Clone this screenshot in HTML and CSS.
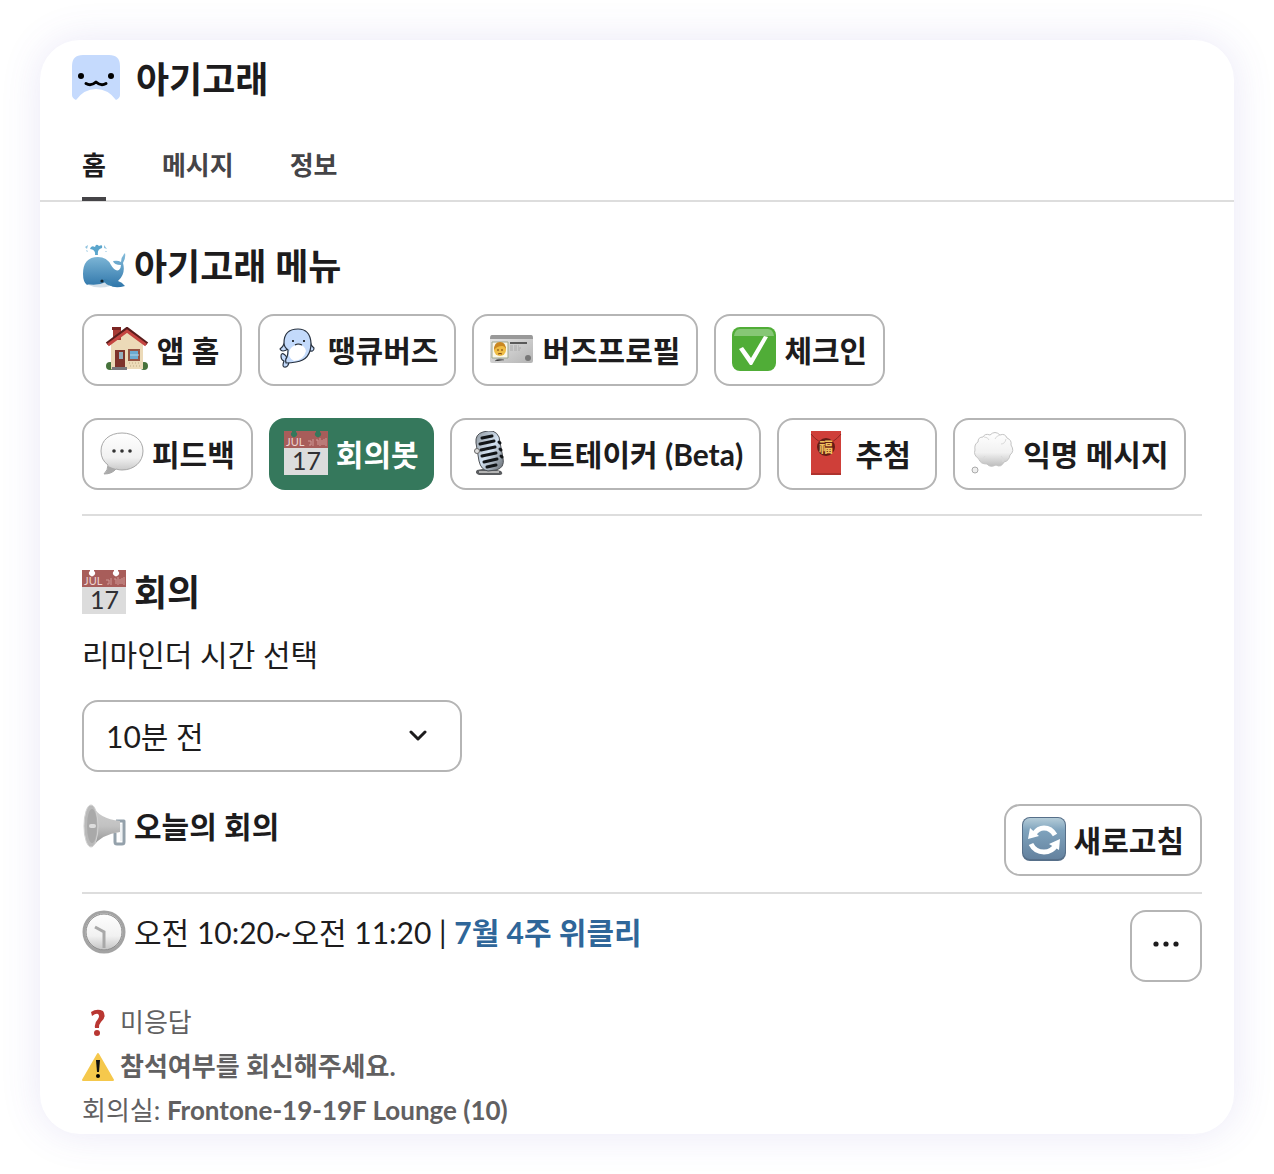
FILE: index.html
```
<!DOCTYPE html>
<html lang="ko">

<head>
	<meta charset="utf-8">
	<meta name="viewport" content="width=device-width, initial-scale=1">
	<title>아기고래</title>
	<link rel="stylesheet" href="styles.css">
</head>

<body>
	<!-- shared gradients -->
	<svg class="defs" width="0" height="0" aria-hidden="true">
		<defs>
			<linearGradient id="g-whale" x1="0" y1="0" x2="0" y2="1">
				<stop offset="0" stop-color="#86bddb"/>
				<stop offset="1" stop-color="#2f76aa"/>
			</linearGradient>
			<linearGradient id="g-gray" x1="0" y1="0" x2="0" y2="1">
				<stop offset="0" stop-color="#ffffff"/>
				<stop offset=".6" stop-color="#f1f1f1"/>
				<stop offset="1" stop-color="#bdbdbd"/>
			</linearGradient>
			<linearGradient id="g-card" x1="0" y1="0" x2="1" y2="1">
				<stop offset="0" stop-color="#e8e8e8"/>
				<stop offset="1" stop-color="#b4b4b4"/>
			</linearGradient>
			<linearGradient id="g-blue" x1="0" y1="0" x2="0" y2="1">
				<stop offset="0" stop-color="#b4ccd8"/>
				<stop offset=".3" stop-color="#7fa3bd"/>
				<stop offset="1" stop-color="#64829f"/>
			</linearGradient>
			<linearGradient id="g-horn" x1="0" y1="0" x2="0" y2="1">
				<stop offset="0" stop-color="#cfcfcf"/>
				<stop offset=".5" stop-color="#c2c2c2"/>
				<stop offset="1" stop-color="#8e8e8e"/>
			</linearGradient>
			<linearGradient id="g-mic" x1="0" y1="0" x2="1" y2="1">
				<stop offset="0" stop-color="#8d959c"/>
				<stop offset=".5" stop-color="#d3e2f2"/>
				<stop offset="1" stop-color="#62676c"/>
			</linearGradient>
		</defs>
	</svg>

	<main class="card">
		<header class="header">
			<svg class="avatar" viewBox="0 0 48 48" aria-hidden="true">
				<path fill="#c5dafd" d="M11 0h26q11 0 11 11v29q0 3-4 5Q36 34 24 34T4 45q-4-2-4-5V11Q0 0 11 0z"/>
				<circle cx="9" cy="21" r="3"/>
				<circle cx="39" cy="21" r="3"/>
				<path fill="none" stroke="#000" stroke-width="3" stroke-linecap="round" stroke-linejoin="round" d="M14 28.500q5 3 10-1.500q5 4.500 10 1.500"/>
			</svg>
			<h1>아기고래</h1>
		</header>
		<nav class="tabs">
			<a class="tab active" href="#home">홈</a>
			<a class="tab" href="#messages">메시지</a>
			<a class="tab" href="#about">정보</a>
		</nav>

		<section class="content menu" id="home">
			<h2 class="title">
				<svg class="icon" viewBox="0 0 44 44" aria-hidden="true">
					<path fill="#5aa5cc" d="M13 11Q14 6 8 5Q9 1 13 3Q14-1 17 2Q21 0 20 4Q15 5 16 11z"/>
					<path fill="#8fc3df" d="M3 3l3-2-1 4zM22 1l3 4-3-1zM4 6l2 1-1 1zM24 7l1 1-2 0z"/>
					<path fill="url(#g-whale)" d="M1 30Q1 13 16 13Q25 13 29 21Q33 28 37 26Q39 24 39 21Q32 21 31 17Q36 16 39 18Q39 13 43 9Q44 14 41 19Q44 30 36 37Q40 38 43 42Q33 45 27 41H5Q1 38 1 30z"/>
					<path fill="#d3dfe8" d="M4 40q12 2 20-2l4 4q-12 4-24-2z"/>
					<path fill="#3c82b0" d="M22 35q8 1 8 7q-8-1-8-7z"/>
					<circle cx="20" cy="37" r="1.6" fill="#14252f"/>
				</svg>
				아기고래 메뉴
			</h2>
			<div class="buttons">
				<button class="btn" type="button">
					<svg class="icon" viewBox="0 0 44 44" aria-hidden="true">
						<circle cx="5" cy="39" r="4" fill="#46723b"/>
						<circle cx="39" cy="39" r="4" fill="#46723b"/>
						<path fill="#ecdab8" d="M6 17L22 3l16 14v25H6z"/>
						<path fill="#a83a34" d="M8 1h8v12H8z"/>
						<path fill="#7c2522" d="M7 0h9v3H7z"/>
						<path fill="none" stroke="#5b1d1c" stroke-width="4" d="M2 17L22 2l20 15"/>
						<path fill="none" stroke="#c54541" stroke-width="3" d="M3 18L22 4l19 14"/>
						<path fill="#7d332c" d="M10 23h10v18H10z"/>
						<path fill="#94aebd" d="M14 25h4v7h-4z"/>
						<path fill="#6caad0" stroke="#965343" stroke-width="2" d="M24 23h10v10H24z"/>
						<path stroke="#b8d6e6" d="M25 28h9"/>
						<path stroke="#bda982" stroke-dasharray="1 2" d="M24 36h12M25 39h11"/>
						<path fill="#77777c" d="M7 40h15v3H7z"/>
					</svg>
					앱 홈
				</button>
				<button class="btn" type="button">
					<svg class="icon" viewBox="0 0 44 44" aria-hidden="true">
						<g fill="#c3dafb" stroke="#27313f" stroke-width="1.2" stroke-linejoin="round">
							<path d="M13 32q-2-1-4-4q-4-3-4 1q0 4 3 5q-2 5 0 6q5 1 5-7z"/>
							<path d="M9 15q-2 5-5 7q2 4 8 0zM34 15q1 4 4 6q0 5-6 2z"/>
							<path d="M8 16Q8 2 22 2q12 0 13 14q0 17-15 19q-5 1-10 1q-1-4 1-6q1-3 1-7q-4-3-4-7z"/>
						</g>
						<path fill="#fff" d="M13 25q2-7 9-7t8 6q-2 9-12 10q-6-3-5-9z"/>
						<circle cx="17" cy="14" r="1"/>
						<circle cx="28" cy="14" r="1"/>
						<path fill="none" stroke="#222" stroke-width="1.2" d="M19 18q3-2 7 0"/>
					</svg>
					땡큐버즈
				</button>
				<button class="btn" type="button">
					<svg class="icon" viewBox="0 0 44 44" aria-hidden="true">
						<rect x="0" y="8" width="43" height="28" rx="2" fill="url(#g-card)"/>
						<path fill="#999" d="M2 8h39q2 0 2 4H0q0-4 2-4z"/>
						<path fill="#faf7e8" stroke="#9ba58e" d="M2 15h16v16H2z"/>
						<circle cx="10" cy="23" r="6" fill="#efbd45"/>
						<path fill="#c98721" d="M4 23q0-8 6-8t6 8q-1-4-4-4q-5 0-8 4z"/>
						<path fill="none" stroke="#76410d" d="M7 23h2M11 23h2M8 27q2-1 4 0"/>
						<path stroke="#333" stroke-width="1.5" d="M20 16h17"/>
						<path stroke="#aaa" stroke-width="1" stroke-dasharray="3 1" d="M20 19h9M20 21h11M20 23h10"/>
						<path stroke="#777" d="M5 34q3-3 9-1"/>
						<circle cx="38" cy="31" r="3" fill="#777"/>
					</svg>
					버즈프로필
				</button>
				<button class="btn" type="button">
					<svg class="icon" viewBox="0 0 44 44" aria-hidden="true">
						<rect width="44" height="44" rx="8" fill="#50ad37"/>
						<path fill="#86c776" d="M8 2h28q5 0 6 7H2q1-7 6-7z"/>
						<path fill="#fff" d="M7 22l4-2 8 11L32 9l4 1-16 28h-2z"/>
					</svg>
					체크인
				</button>
			</div>
			<div class="buttons">
				<button class="btn" type="button">
					<svg class="icon" viewBox="0 0 44 44" aria-hidden="true">
						<path fill="url(#g-gray)" stroke="#a8a8a8" d="M22 2c12 0 21 7 21 18S34 39 22 39q-3 0-6-1q-4 5-12 5q4-4 4-9Q1 29 1 20C1 9 10 2 22 2z"/>
						<path fill="#aaa" d="M8 35q4 2 8 3q-4 5-12 5q4-3 4-8z"/>
						<circle cx="14" cy="20" r="1.8" fill="#333"/>
						<circle cx="22" cy="20" r="1.8" fill="#333"/>
						<circle cx="30" cy="20" r="1.8" fill="#333"/>
					</svg>
					피드백
				</button>
				<button class="btn primary" type="button">
					<svg class="icon calendar" viewBox="0 0 44 44" aria-hidden="true">
						<path fill="#dcdcdc" d="M0 17h44v27H0z"/>
						<path fill="#a85d5a" d="M0 0h8v1a3 3 0 1 0 4 0v-1h20v1a3 3 0 1 0 4 0v-1h8v17H0z"/>
						<text x="2" y="15" font-size="11" fill="#edd5d3">JUL</text>
						<path stroke="#cf9a96" fill="none" d="M24 10h3v4h-2M29 8v7M32 9h2v5M36 7v8M38 9v5M40 8v6M42 7v8"/>
						<text x="8" y="39" font-size="25" fill="#303033">17</text>
					</svg>
					회의봇
				</button>
				<button class="btn" type="button">
					<svg class="icon" viewBox="0 0 44 44" aria-hidden="true">
						<path fill="#5b5d60" d="M9 39q12-3 24 1q3 3-1 4H11q-5-2-2-5z"/>
						<path fill="#b4b4b4" d="M11 40h20v2H11z"/>
						<path fill="url(#g-mic)" stroke="#4d5156" d="M8 12Q7 3 15 1q12-4 16 5l4 21q2 10-7 12l-8 1q-7-1-9-10z"/>
						<path fill="none" stroke="#111417" stroke-width="3" stroke-linecap="round" d="M14 7l10-2M12 13l14-3M13 19l14-3M14 25l14-3M16 31l13-3M19 36l9-2M31 11l1 1M32 18l1 1M33 25l1 1"/>
						<circle cx="9" cy="20" r="2.5" fill="#e0e0e0" stroke="#666"/>
					</svg>
					노트테이커 (Beta)
				</button>
				<button class="btn" type="button">
					<svg class="icon" viewBox="0 0 44 44" aria-hidden="true">
						<path fill="#cf3f39" d="M7 0h30v44H7z"/>
						<path fill="none" stroke="#8e2723" d="M7 3q7 9 15 9t15-9M7 43h30"/>
						<circle cx="22" cy="16" r="9" fill="#641e16"/>
						<text x="15" y="21" font-size="14" fill="#f1c05f">福</text>
					</svg>
					추첨
				</button>
				<button class="btn" type="button">
					<svg class="icon" viewBox="0 0 44 44" aria-hidden="true">
						<path fill="url(#g-gray)" stroke="#c4c4c4" d="M12 6q2-4 7-2q5-5 10 0q5-2 7 3q5 2 4 7q4 6-1 10q-1 6-6 7q-3 6-8 3q-6 3-9-1q-7 0-8-5q-6-4-4-9q-1-6 3-8q0-5 5-5z"/>
						<path fill="none" stroke="#dadada" d="M13 6q4 0 5 3M29 4q-4 1-5 4M35 8q-1 5-5 5M7 28q5 1 7-3M32 31q1-4-2-6"/>
						<circle cx="4" cy="39" r="3" fill="#eee" stroke="#aaa"/>
					</svg>
					익명 메시지
				</button>
			</div>
		</section>

		<section class="content meeting">
			<h2 class="title">
				<svg class="icon calendar" viewBox="0 0 44 44" aria-hidden="true">
					<path fill="#dcdcdc" d="M0 17h44v27H0z"/>
					<path fill="#a85d5a" d="M0 0h8v1a3 3 0 1 0 4 0v-1h20v1a3 3 0 1 0 4 0v-1h8v17H0z"/>
					<text x="2" y="15" font-size="11" fill="#edd5d3">JUL</text>
					<path stroke="#cf9a96" fill="none" d="M24 10h3v4h-2M29 8v7M32 9h2v5M36 7v8M38 9v5M40 8v6M42 7v8"/>
					<text x="8" y="39" font-size="25" fill="#303033">17</text>
				</svg>
				회의
			</h2>
			<label class="label" for="reminder">리마인더 시간 선택</label>
			<div class="select">
				<select id="reminder">
					<option>10분 전</option>
				</select>
				<svg class="chevron" viewBox="0 0 20 12" aria-hidden="true">
					<path fill="none" stroke="#1d1c1d" stroke-width="3" stroke-linecap="round" stroke-linejoin="round" d="M3 2l7 7 7-7"/>
				</svg>
			</div>

			<div class="row today">
				<h3 class="line">
					<svg class="icon" viewBox="0 0 44 44" aria-hidden="true">
						<path fill="none" stroke="#94a1ab" stroke-width="3" stroke-linejoin="round" d="M34 17h8v21q0 2-2 2h-5q-2 0-2-2v-9"/>
						<path fill="none" stroke="#dfe5e9" d="M39 20v17"/>
						<path fill="url(#g-horn)" d="M10 1Q17 15 38 17v11Q20 30 10 43z"/>
						<ellipse cx="9" cy="22" rx="7" ry="21" fill="#b9b9b9" stroke="#d2d2d2"/>
						<ellipse cx="10" cy="22" rx="5" ry="17" fill="#a9a9a9"/>
						<rect x="7" y="20" width="7" height="4" rx="2" fill="#ddd"/>
					</svg>
					오늘의 회의
				</h3>
				<button class="btn" type="button">
					<svg class="icon" viewBox="0 0 44 44" aria-hidden="true">
						<rect width="44" height="44" rx="8" fill="#566f89"/>
						<rect x="1" y="1" width="42" height="41" rx="7" fill="url(#g-blue)"/>
						<path fill="none" stroke="#fff" stroke-width="5" d="M12 17Q16 11 22 11Q29 11 33 18M9 27Q13 35 22 35Q30 35 34 28"/>
						<path fill="#fff" d="M8 11l-2 11 11-3zM38 22l-11 5 10 6z"/>
					</svg>
					새로고침
				</button>
			</div>

			<div class="row event">
				<p class="line">
					<svg class="icon" viewBox="0 0 44 44" aria-hidden="true">
						<circle cx="22" cy="22" r="20" fill="url(#g-gray)" stroke="#a3a3a3" stroke-width="3"/>
						<circle cx="22" cy="22" r="18" fill="none" stroke="#888"/>
						<path fill="none" stroke="#a8a8a8" stroke-width="3" d="M13 17l9 5v16"/>
					</svg>
					<span>오전 10:20~오전 11:20 | <a href="#weekly">7월 4주 위클리</a></span>
				</p>
				<button class="btn more" type="button" aria-label="더보기">
					<svg viewBox="0 0 26 6" aria-hidden="true">
						<circle cx="3" cy="3" r="2.6"/>
						<circle cx="13" cy="3" r="2.6"/>
						<circle cx="23" cy="3" r="2.6"/>
					</svg>
				</button>
			</div>

			<div class="context">
				<p>
					<svg class="icon small" viewBox="0 0 32 32" aria-hidden="true">
						<path fill="#b93732" d="M9 6Q15 2 21 5Q25 11 19 16Q17 18 17 22H13Q12 17 16 13Q18 10 16 8Q14 7 10 10z"/>
						<circle cx="15" cy="27" r="3" fill="#b93732"/>
					</svg>
					미응답
				</p>
				<p>
					<svg class="icon small" viewBox="0 0 32 32" aria-hidden="true">
						<path fill="#f5c84c" stroke="#f5c84c" stroke-width="2" stroke-linejoin="round" d="M16 4l15 26H1z"/>
						<path fill="#111" d="M14 10h4l-1 12h-2z"/>
						<circle cx="16" cy="26" r="2"/>
					</svg>
					<b>참석여부를 회신해주세요.</b>
				</p>
				<p><span>회의실: <b>Frontone-19-19F Lounge (10)</b></span></p>
			</div>
		</section>
	</main>
</body>

</html>
```
FILE: styles.css
```
* {
	box-sizing: border-box;
}

body {
	margin: 0;
	padding: 40px;
	background: #fff;
	color: #1d1c1d;
	font-family: Lato, "Noto Sans CJK KR", sans-serif;
	font-size: 30px;
	line-height: 44px;
}

h1, h2, h3, p {
	margin: 0;
}

a {
	color: #2f6699;
	font-weight: bold;
	text-decoration: none;
}

.defs {
	position: absolute;
}

.card {
	background: #fff;
	border-radius: 40px;
	box-shadow: 0 0 40px rgba(90, 80, 190, 0.13);
}

.header {
	display: flex;
	align-items: center;
	gap: 16px;
	padding: 15px 32px 0;
}

.header h1 {
	font-size: 36px;
	line-height: 48px;
}

.avatar {
	width: 48px;
	height: 48px;
}

.tabs {
	display: flex;
	gap: 56px;
	margin-top: 40px;
	padding: 0 42px;
	border-bottom: 2px solid #ddd;
}

.tab {
	margin-bottom: -1px;
	padding-bottom: 10px;
	border-bottom: 4px solid transparent;
	color: #454447;
	font-size: 26px;
}

.tab.active {
	border-color: #454447;
	color: #1d1c1d;
}

.content {
	margin: 0 32px 0 42px;
}

.menu {
	padding: 42px 0 24px;
	border-bottom: 2px solid #ddd;
}

.title,
.line {
	display: flex;
	align-items: center;
	gap: 8px;
}

.title {
	font-size: 36px;
}

.line {
	font-size: 30px;
}

.icon {
	flex: none;
	width: 44px;
	height: 44px;
}

.small {
	width: 32px;
	height: 32px;
}

.calendar {
	font-weight: normal;
}

.buttons {
	display: flex;
	flex-wrap: wrap;
	gap: 16px;
	margin-top: 26px;
}

.buttons + .buttons {
	margin-top: 32px;
}

.btn {
	display: flex;
	align-items: center;
	justify-content: center;
	gap: 8px;
	min-width: 160px;
	height: 72px;
	padding: 0 16px;
	border: 2px solid #b5b5b5;
	border-radius: 16px;
	background: #fff;
	color: #1d1c1d;
	font: inherit;
	font-weight: bold;
	cursor: pointer;
}

.btn .icon {
	margin-bottom: 2px;
}

.primary {
	padding: 0 15px;
	border: 0;
	background: #35785c;
	color: #fff;
}

.meeting {
	padding: 54px 0 2px;
}

.label {
	display: block;
	margin-top: 18px;
}

.select {
	position: relative;
	max-width: 380px;
	margin-top: 24px;
}

.select select {
	display: block;
	width: 100%;
	height: 72px;
	padding: 0 22px;
	border: 2px solid #b5b5b5;
	border-radius: 16px;
	background: #fff;
	color: #1d1c1d;
	font: inherit;
	appearance: none;
}

.chevron {
	position: absolute;
	top: 30px;
	right: 34px;
	width: 20px;
	height: 12px;
	pointer-events: none;
}

.row {
	display: flex;
	align-items: flex-start;
	justify-content: space-between;
}

.today {
	margin-top: 32px;
	padding-bottom: 16px;
	border-bottom: 2px solid #ddd;
}

.event {
	padding: 16px 0 18px;
}

.more {
	min-width: 72px;
	padding: 0;
}

.more svg {
	width: 26px;
	height: 6px;
	margin-bottom: 4px;
	fill: #1d1c1d;
}

.context {
	color: #616061;
	font-size: 26px;
}

.context p {
	display: flex;
	align-items: center;
	gap: 6px;
}
```
